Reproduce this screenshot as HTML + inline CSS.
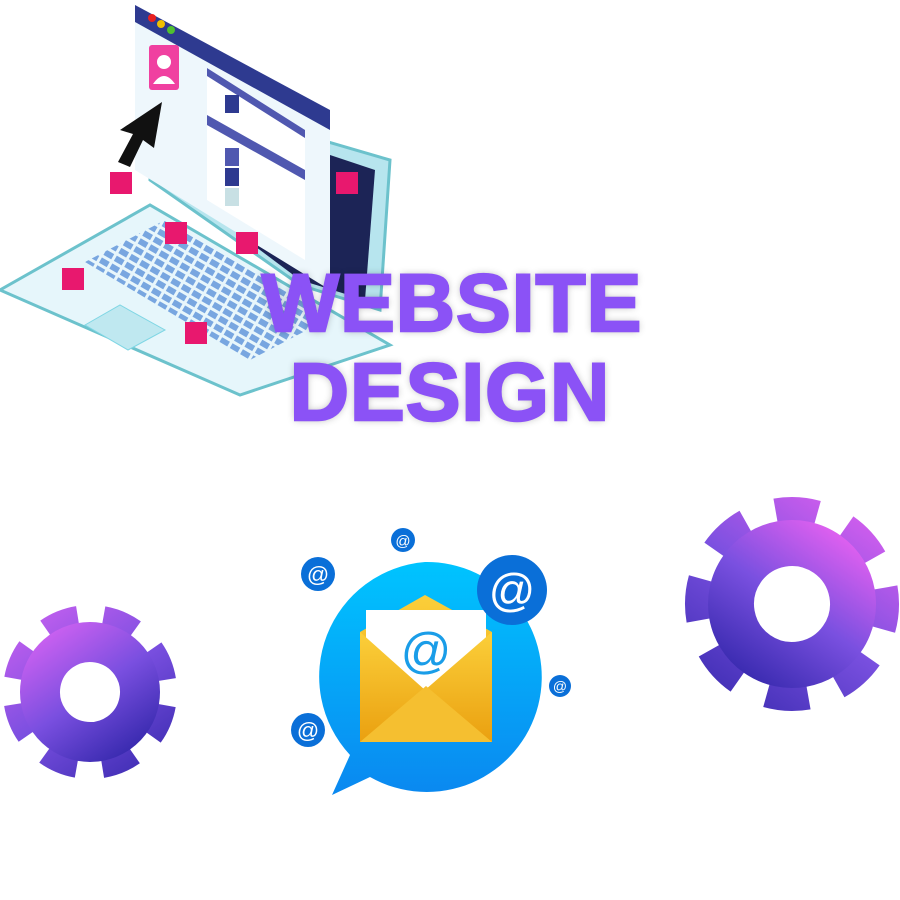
<!DOCTYPE html>
<html><head><style>
html,body{margin:0;padding:0;background:#fff;width:900px;height:900px;overflow:hidden;position:relative;font-family:"Liberation Sans",sans-serif}
.t{position:absolute;left:0;width:900px;text-align:center;font-weight:bold;color:#8b52f6;font-size:82px;line-height:1;text-shadow:0 0 8px rgba(0,0,0,.3);-webkit-text-stroke:2.5px #8b52f6;letter-spacing:1px}
</style></head><body>
<svg width="900" height="900" style="position:absolute;left:0;top:0">
<defs>
<linearGradient id="g1" x1="0" y1="0" x2="1" y2="1"><stop offset="0" stop-color="#c860f0"/><stop offset=".5" stop-color="#7a4fe0"/><stop offset="1" stop-color="#3a2bb0"/></linearGradient>
<linearGradient id="g2" x1="1" y1="0" x2="0" y2="1"><stop offset="0" stop-color="#e060f0"/><stop offset=".5" stop-color="#7a50e0"/><stop offset="1" stop-color="#3a2bb0"/></linearGradient>
<linearGradient id="bub" x1="0" y1="0" x2="0" y2="1"><stop offset="0" stop-color="#00c4ff"/><stop offset="1" stop-color="#0a88f0"/></linearGradient>
<linearGradient id="env" x1="0" y1="0" x2="0" y2="1"><stop offset="0" stop-color="#fbcf3a"/><stop offset="1" stop-color="#eaa010"/></linearGradient>
<pattern id="keys" width="12" height="9" patternUnits="userSpaceOnUse" patternTransform="rotate(30)"><rect width="12" height="9" fill="#e8f6fb"/><rect x="1" y="1" width="9" height="6" fill="#78a6e0"/></pattern>
</defs>
<polygon points="0,290 150,205 390,345 240,395" fill="#e6f6fb" stroke="#6cc2cc" stroke-width="3"/>
<polygon points="85,262 165,220 330,318 250,360" fill="url(#keys)"/>
<polygon points="85,325 120,305 165,330 128,350" fill="#bfe8f0" stroke="#7fd6e4"/>
<polygon points="150,180 150,90 390,160 380,310 300,285" fill="#b7e5ee" stroke="#6cc2cc" stroke-width="3"/>
<polygon points="160,175 165,100 375,170 365,300 300,280" fill="#1c2456"/>
<polygon points="135,5 330,110 330,290 135,170" fill="#eef7fc"/>
<polygon points="135,5 330,110 330,130 135,22" fill="#2e3a90"/>
<circle cx="152" cy="18" r="4" fill="#e82020"/><circle cx="161" cy="24" r="4" fill="#f0c000"/><circle cx="171" cy="30" r="4" fill="#50c030"/>
<rect x="149" y="45" width="30" height="45" rx="3" fill="#f040a0"/>
<circle cx="164" cy="62" r="7" fill="#fff"/><path d="M153 84 q11-16 22 0z" fill="#fff"/>
<polygon points="207,68 305,130 305,260 207,200" fill="#fff"/>
<polygon points="207,68 305,130 305,138 207,76" fill="#5058b0"/>
<polygon points="207,115 305,170 305,180 207,125" fill="#5058b0"/>
<rect x="225" y="95" width="14" height="18" fill="#2e3a90"/>
<rect x="225" y="148" width="14" height="18" fill="#5058b0"/><rect x="225" y="168" width="14" height="18" fill="#2e3a90"/><rect x="225" y="188" width="14" height="18" fill="#c8e0e4"/>
<polygon points="162,102 120,130 133,134 118,162 130,167 143,140 154,148" fill="#111"/>
<g fill="#e8186e"><rect x="110" y="172" width="22" height="22"/><rect x="165" y="222" width="22" height="22"/><rect x="236" y="232" width="22" height="22"/><rect x="336" y="172" width="22" height="22"/><rect x="62" y="268" width="22" height="22"/><rect x="185" y="322" width="22" height="22"/></g>
<g transform="translate(90,692) rotate(10)">
<circle r="76" fill="none" stroke="url(#g1)" stroke-width="22" stroke-dasharray="34 25.7"/>
<circle r="50" fill="none" stroke="url(#g1)" stroke-width="40"/>
</g>
<g transform="translate(792,604) rotate(-10)">
<circle r="94" fill="none" stroke="url(#g2)" stroke-width="26" stroke-dasharray="42 31.8"/>
<circle r="61" fill="none" stroke="url(#g2)" stroke-width="46"/>
</g>
<path d="M425 562 a115 115 0 1 1 -55 215 l-38 18 l18-40 a115 115 0 0 1 75-193z" fill="url(#bub)"/>
<polygon points="360,632 425,595 492,632 492,742 360,742" fill="url(#env)"/>
<rect x="366" y="610" width="120" height="100" fill="#fff"/>
<polygon points="360,632 425,690 492,632 492,742 360,742" fill="url(#env)"/>
<polygon points="360,742 426,686 492,742" fill="#f5bf30"/>
<text x="426" y="668" font-size="50" fill="#1a9de8" text-anchor="middle" font-family="Liberation Sans">@</text>
<circle cx="512" cy="590" r="35" fill="#0a6fd8"/><text x="512" y="606" font-size="46" fill="#fff" text-anchor="middle" font-family="Liberation Sans">@</text>
<g fill="#0a6fd8"><circle cx="318" cy="574" r="17"/><circle cx="403" cy="540" r="12"/><circle cx="308" cy="730" r="17"/><circle cx="560" cy="686" r="11"/></g>
<g fill="#fff" text-anchor="middle" font-family="Liberation Sans"><text x="318" y="582" font-size="22">@</text><text x="403" y="546" font-size="15">@</text><text x="308" y="738" font-size="22">@</text><text x="560" y="691" font-size="14">@</text></g>
</svg>
<div class="t" style="top:263px;left:2px">WEBSITE</div>
<div class="t" style="top:352px">DESIGN</div>
</body></html>
